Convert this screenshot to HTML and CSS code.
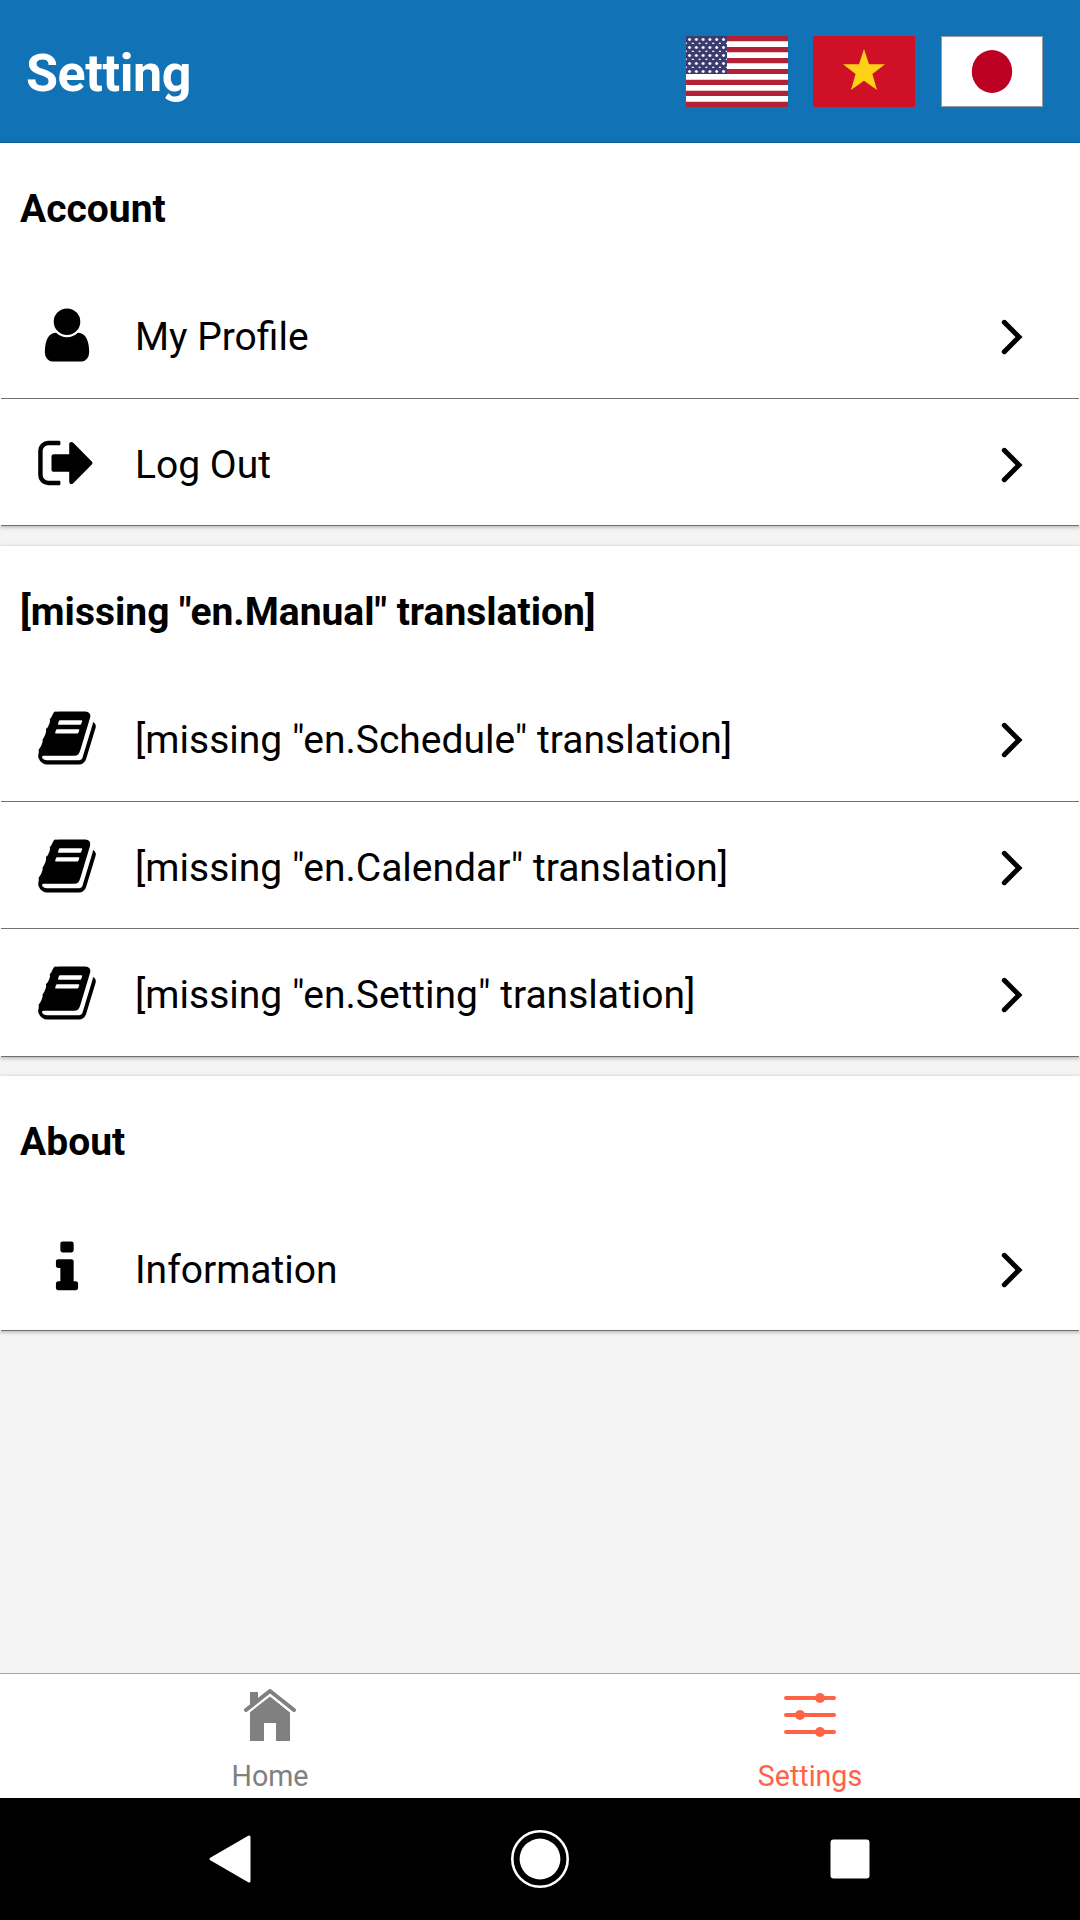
FILE: index.html
```html
<!DOCTYPE html>
<html lang="en">
<head>
<meta charset="utf-8">
<title>Setting</title>
<link rel="stylesheet" href="styles.css">
</head>
<body>
<svg class="defs" width="0" height="0" aria-hidden="true">
  <symbol id="book" viewBox="0 0 1792 1792"><path d="M1703 478q40 57 18 129l-275 906q-19 64-76.5 107.5t-122.5 43.5h-923q-77 0-148.5-53.5t-99.5-131.5q-24-67-2-127 0-4 3-27t4-37q1-8-3-21.5t-3-19.5q2-11 8-21t16.5-23.5 16.5-23.5q23-38 45-91.5t30-91.5q3-10 .5-30t-.5-28q3-11 17-28t17-23q21-36 42-92t25-90q1-9-2.5-32t.5-28q4-13 22-30.5t22-22.5q19-26 42.5-84.5t27.5-96.5q1-8-3-25.5t-2-26.5q2-8 9-18t18-23 17-21q8-12 16.5-30.5t15-35 16-36 19.5-32 26.5-23.5 36-11.5 47.5 5.5l-1 3q38-9 51-9h761q74 0 114 56t18 130l-274 906q-36 119-71.5 153.5t-128.5 34.5h-869q-27 0-38 15-11 16-1 43 24 70 144 70h923q29 0 56-15.5t35-41.5l300-987q7-22 5-57 38 15 59 43zm-1064 2q-4 13 2 22.5t20 9.5h608q13 0 25.5-9.5t16.5-22.5l21-64q4-13-2-22.5t-20-9.5h-608q-13 0-25.5 9.5t-16.5 22.5zm-83 256q-4 13 2 22.5t20 9.5h608q13 0 25.5-9.5t16.5-22.5l21-64q4-13-2-22.5t-20-9.5h-608q-13 0-25.5 9.5t-16.5 22.5z"/></symbol>
  <symbol id="chevron" viewBox="0 0 24 38"><path d="M4.3 4.3L19 19L4.3 33.7" fill="none" stroke="#000" stroke-width="5" stroke-linecap="round"/></symbol>
  <pattern id="stars" width="6.8" height="8" patternUnits="userSpaceOnUse"><path d="M2 3.5h3M3.5 2v3M5.8 7.4h2M-1 7.4h2" stroke="#fff" stroke-width="1.4"/></pattern>
</svg>
<div class="screen">
  <header class="header">
    <h1 class="header-title">Setting</h1>
    <div class="flags">
      <svg class="flag" viewBox="0 0 102 71">
        <path fill="#fff" d="M0 0h102v71H0z"/>
        <path stroke="#b22234" stroke-width="5.2" d="M0 2.6h102M0 13.65h102M0 24.58h102M0 35.5h102M0 46.42h102M0 57.35h102M0 68.4h102"/>
        <path fill="#3c3b6e" d="M0 0h41v38H0z"/>
        <path fill="url(#stars)" d="M0 0h41v38H0z"/>
      </svg>
      <svg class="flag" viewBox="0 0 102 71">
        <path fill="#ce1126" d="M0 0h102v71H0z"/>
        <path fill="#fcd116" d="M51 13L56 28.3H72L59.4 38L64 54L51 44.8L38 54L42.6 38L30 28.3H46z"/>
      </svg>
      <svg class="flag flag-jp" viewBox="0 0 102 71">
        <path fill="#fff" stroke="#999" d="M.5 .5h101v70H.5z"/>
        <ellipse cx="51" cy="35.5" rx="20.2" ry="21.4" fill="#bc0024"/>
      </svg>
    </div>
  </header>
  <main class="content">
    <section class="card">
      <h2 class="card-title">Account</h2>
      <div class="row">
        <svg class="icon" viewBox="0 0 1792 1792"><path d="M1536 1399q0 109-62.5 187t-150.5 78h-854q-88 0-150.5-78t-62.5-187q0-85 8.5-160.5t31.5-152 58.5-131 94-89 134.5-34.5q131 128 313 128t313-128q76 0 134.5 34.5t94 89 58.5 131 31.5 152 8.5 160.5zm-256-887q0 159-112.5 271.5t-271.5 112.5-271.5-112.5-112.5-271.5 112.5-271.5 271.5-112.5 271.5 112.5 112.5 271.5z"/></svg>
        <span class="label">My Profile</span>
        <svg class="chevron"><use href="#chevron"/></svg>
      </div>
      <div class="row">
        <svg class="icon" viewBox="0 0 1792 1792"><path d="M704 1440q0 4 1 20t.5 26.5-3 23.5-10 19.5-20.5 6.5h-320q-119 0-203.5-84.5t-84.5-203.5v-704q0-119 84.5-203.5t203.5-84.5h320q13 0 22.5 9.5t9.5 22.5q0 4 1 20t.5 26.5-3 23.5-10 19.5-20.5 6.5h-320q-66 0-113 47t-47 113v704q0 66 47 113t113 47h312l11.5 1 11.5 3 8 5.5 7 9 2 13.5zm928-544q0 26-19 45l-544 544q-19 19-45 19t-45-19-19-45v-288h-448q-26 0-45-19t-19-45v-384q0-26 19-45t45-19h448v-288q0-26 19-45t45-19 45 19l544 544q19 19 19 45z"/></svg>
        <span class="label">Log Out</span>
        <svg class="chevron"><use href="#chevron"/></svg>
      </div>
    </section>
    <section class="card card-manual">
      <h2 class="card-title">[missing "en.Manual" translation]</h2>
      <div class="row">
        <svg class="icon"><use href="#book"/></svg>
        <span class="label">[missing "en.Schedule" translation]</span>
        <svg class="chevron"><use href="#chevron"/></svg>
      </div>
      <div class="row">
        <svg class="icon"><use href="#book"/></svg>
        <span class="label">[missing "en.Calendar" translation]</span>
        <svg class="chevron"><use href="#chevron"/></svg>
      </div>
      <div class="row">
        <svg class="icon"><use href="#book"/></svg>
        <span class="label">[missing "en.Setting" translation]</span>
        <svg class="chevron"><use href="#chevron"/></svg>
      </div>
    </section>
    <section class="card card-about">
      <h2 class="card-title">About</h2>
      <div class="row">
        <svg class="icon" viewBox="0 0 1792 1792"><path d="M1216 1344v128q0 26-19 45t-45 19h-512q-26 0-45-19t-19-45v-128q0-26 19-45t45-19h64v-384h-64q-26 0-45-19t-19-45v-128q0-26 19-45t45-19h384q26 0 45 19t19 45v576h64q26 0 45 19t19 45zm-128-1152v192q0 26-19 45t-45 19h-256q-26 0-45-19t-19-45v-192q0-26 19-45t45-19h256q26 0 45 19t19 45z"/></svg>
        <span class="label">Information</span>
        <svg class="chevron"><use href="#chevron"/></svg>
      </div>
    </section>
  </main>
  <nav class="tabs">
    <div class="tab">
      <svg class="tab-icon" viewBox="0 0 52 52">
        <path d="M6 24V3h8v11L26 7L46 23.5V52H32V34H20V52H6z"/>
        <path class="roof-gap" d="M0 26L26 5.5L52 26"/>
        <path class="roof" d="M2 21L26 2L50 21"/>
      </svg>
      <span class="tab-label">Home</span>
    </div>
    <div class="tab tab-active">
      <svg class="tab-icon" viewBox="0 0 52 52">
        <path d="M2 9H50M2 26H50M2 43H50" fill="none" stroke="currentColor" stroke-width="4" stroke-linecap="round"/>
        <circle cx="36" cy="9" r="5"/><circle cx="16" cy="26" r="5"/><circle cx="36" cy="43" r="5"/>
      </svg>
      <span class="tab-label">Settings</span>
    </div>
  </nav>
  <footer class="system-nav">
    <svg class="sys-icon" viewBox="0 0 60 60"><path d="M49 8V52L11 30z" fill="#fff" stroke="#fff" stroke-width="3" stroke-linejoin="round"/></svg>
    <svg class="sys-icon" viewBox="0 0 60 60"><circle cx="30" cy="30" r="27.7" fill="none" stroke="#fff" stroke-width="2.6"/><circle cx="30" cy="30" r="20.4" fill="#fff"/></svg>
    <svg class="sys-icon" viewBox="0 0 60 60"><rect x="10.5" y="10.5" width="39" height="39" rx="3" fill="#fff"/></svg>
  </footer>
</div>
</body>
</html>
```

FILE: styles.css
```css
* { box-sizing: border-box; }
body { margin: 0; font-family: Roboto, sans-serif; color: #000; background: #f4f4f4; }
svg { display: block; flex: none; }
.defs { position: absolute; }
.screen { width: 1080px; height: 1920px; display: flex; flex-direction: column; overflow: hidden; }
.header { height: 143px; flex: none; background: #1173b6; border-bottom: 1px solid #0f67a3; display: flex; justify-content: space-between; padding: 0 37px 0 26px; }
.header-title { margin: 0; font-size: 52px; letter-spacing: -.4px; line-height: 61px; font-weight: 700; color: #fff; padding-top: 43px; }
.flags { display: flex; gap: 25px; padding-top: 36px; }
.flag { width: 102px; height: 71px; }
.flag-jp { margin-left: 1px; }
.content { flex: 1; }
.card { background: #fff; box-shadow: 0 1px 4px rgba(0,0,0,.3); }
.card-manual { margin-top: 20px; }
.card-about { margin-top: 19px; }
.card-title { margin: 0; height: 128px; line-height: 46px; padding: 43px 20px 0; font-size: 39px; font-weight: 700; }
.row { height: 127.5px; margin: 0 1px; padding: 0 55px 0 35px; border-bottom: 1px solid #6f6f6f; display: flex; align-items: center; }
.icon { width: 62px; height: 62px; margin-top: 2px; }
.label { flex: 1; padding-left: 37px; font-size: 39px; line-height: 46px; padding-top: 6px; }
.chevron { width: 24px; height: 38px; margin-top: 6px; }
.tabs { height: 125px; flex: none; display: flex; border-top: 1px solid #a7a7a7; background: #fff; }
.tab { flex: 1; display: flex; flex-direction: column; align-items: center; padding-top: 15px; color: #808080; }
.tab-active { color: #ff6347; }
.tab-icon { width: 52px; height: 52px; fill: currentColor; }
.tab-label { margin-top: 18px; font-size: 28.6px; line-height: 34px; }
.roof { fill: none; stroke: currentColor; stroke-width: 4; stroke-linecap: round; stroke-linejoin: round; }
.roof-gap { fill: none; stroke: #fff; stroke-width: 3; }
.system-nav { height: 122px; flex: none; background: #000; display: flex; justify-content: space-between; align-items: center; padding: 0 200px; }
.sys-icon { width: 60px; height: 60px; }
```
